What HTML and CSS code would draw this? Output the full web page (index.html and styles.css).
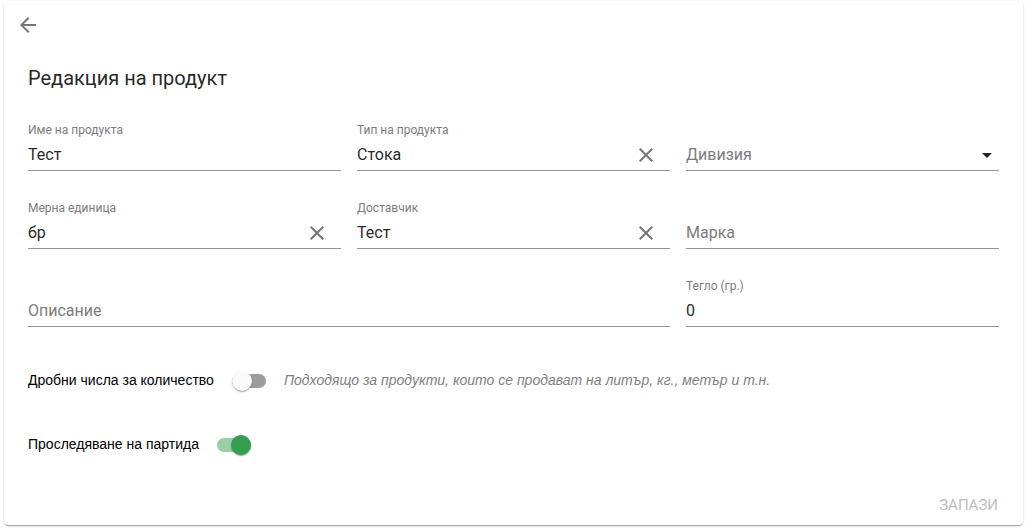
FILE: index.html
```html
<!DOCTYPE html>
<html lang="bg">
<head>
<meta charset="utf-8">
<meta name="viewport" content="width=device-width, initial-scale=1">
<title>Редакция на продукт</title>
<link rel="stylesheet" href="styles.css">
</head>
<body>
<main class="card">
  <button class="icon-button back" type="button" aria-label="Назад">
    <svg viewBox="0 0 24 24"><path d="M20 11H7.83l5.59-5.59L12 4l-8 8 8 8 1.41-1.41L7.83 13H20v-2z"/></svg>
  </button>
  <form class="form">
    <h1 class="title">Редакция на продукт</h1>
    <div class="fields">
      <div class="field">
        <label class="field-label" for="name">Име на продукта</label>
        <div class="field-control"><input class="field-input" id="name" type="text" value="Тест"></div>
      </div>
      <div class="field">
        <label class="field-label" for="type">Тип на продукта</label>
        <div class="field-control clearable">
          <input class="field-input" id="type" type="text" value="Стока">
          <button class="icon-button" type="button" aria-label="Изчисти типа">
            <svg viewBox="0 0 24 24"><path d="M19 6.41L17.59 5 12 10.59 6.41 5 5 6.41 10.59 12 5 17.59 6.41 19 12 13.41 17.59 19 19 17.59 13.41 12z"/></svg>
          </button>
        </div>
      </div>
      <div class="field">
        <div class="field-control">
          <select class="field-input field-select" aria-label="Дивизия"><option>Дивизия</option></select>
        </div>
      </div>
      <div class="field">
        <label class="field-label" for="unit">Мерна единица</label>
        <div class="field-control clearable">
          <input class="field-input" id="unit" type="text" value="бр">
          <button class="icon-button" type="button" aria-label="Изчисти мерната единица">
            <svg viewBox="0 0 24 24"><path d="M19 6.41L17.59 5 12 10.59 6.41 5 5 6.41 10.59 12 5 17.59 6.41 19 12 13.41 17.59 19 19 17.59 13.41 12z"/></svg>
          </button>
        </div>
      </div>
      <div class="field">
        <label class="field-label" for="supplier">Доставчик</label>
        <div class="field-control clearable">
          <input class="field-input" id="supplier" type="text" value="Тест">
          <button class="icon-button" type="button" aria-label="Изчисти доставчика">
            <svg viewBox="0 0 24 24"><path d="M19 6.41L17.59 5 12 10.59 6.41 5 5 6.41 10.59 12 5 17.59 6.41 19 12 13.41 17.59 19 19 17.59 13.41 12z"/></svg>
          </button>
        </div>
      </div>
      <div class="field">
        <div class="field-control"><input class="field-input" type="text" placeholder="Марка" aria-label="Марка"></div>
      </div>
      <div class="field field-wide">
        <div class="field-control"><input class="field-input" type="text" placeholder="Описание" aria-label="Описание"></div>
      </div>
      <div class="field">
        <label class="field-label" for="weight">Тегло (гр.)</label>
        <div class="field-control"><input class="field-input" id="weight" type="text" inputmode="numeric" value="0"></div>
      </div>
    </div>
    <div class="switches">
      <div class="switch-row">
        <label class="switch-label" for="fractions">Дробни числа за количество</label>
        <input class="switch" id="fractions" type="checkbox" role="switch">
        <em class="switch-label hint">Подходящо за продукти, които се продават на литър, кг., метър и т.н.</em>
      </div>
      <div class="switch-row">
        <label class="switch-label" for="batch">Проследяване на партида</label>
        <input class="switch" id="batch" type="checkbox" role="switch" checked>
      </div>
    </div>
    <div class="actions"><button class="save" type="submit" disabled>ЗАПАЗИ</button></div>
  </form>
</main>
</body>
</html>
```
FILE: styles.css
```css
* {
  box-sizing: border-box;
}

body {
  margin: 0;
  padding: 1px 4px 3px;
  background: #fff;
  color: rgba(0, 0, 0, 0.87);
  font-family: Roboto, "Liberation Sans", sans-serif;
  font-size: 16px;
}

.card {
  padding: 12px 0 8px;
  border-radius: 4px;
  background: #fff;
  box-shadow: 0 2px 1px -1px rgba(0, 0, 0, 0.2), 0 1px 1px rgba(0, 0, 0, 0.14), 0 1px 3px rgba(0, 0, 0, 0.12);
}

.icon-button {
  flex: none;
  width: 24px;
  height: 24px;
  padding: 0;
  border: 0;
  background: none;
  color: #757575;
  cursor: pointer;
}

.icon-button svg {
  display: block;
  width: 24px;
  height: 24px;
  fill: currentColor;
}

.back {
  display: block;
  margin-left: 12px;
}

.form {
  padding: 0 24px;
}

.title {
  margin: 29px 0 31px;
  font-size: 20px;
  font-weight: 400;
  line-height: 24px;
}

.fields {
  display: grid;
  grid-template-columns: repeat(3, minmax(0, 1fr));
  gap: 28px 16px;
}

.field {
  display: flex;
  flex-direction: column;
  justify-content: flex-end;
  min-height: 50px;
}

.field-wide {
  grid-column: span 2;
}

.field-label {
  color: #7c7c7c;
  font-size: 12px;
  line-height: 18px;
}

.field-control {
  display: flex;
  align-items: center;
  height: 32px;
  border-bottom: 1px solid #949494;
}

.clearable {
  padding-right: 12px;
}

.field-input {
  flex: 1;
  min-width: 0;
  height: 31px;
  padding: 0;
  border: 0;
  outline: 0;
  background: none;
  color: inherit;
  font: inherit;
}

.field-input::placeholder {
  color: #7c7c7c;
  opacity: 1;
}

.field-select {
  appearance: none;
  background: url("data:image/svg+xml,%3Csvg xmlns='http://www.w3.org/2000/svg' viewBox='0 0 24 24'%3E%3Cpath fill='%23212121' d='M7 10l5 5 5-5z'/%3E%3C/svg%3E") right center / 24px 24px no-repeat;
  color: #7c7c7c;
}

.switches {
  display: grid;
  gap: 32px;
  padding: 38px 0 32px;
}

.switch-row {
  display: flex;
  align-items: center;
  gap: 18px;
  min-height: 32px;
  color: #000;
  font-family: "Liberation Sans", Arial, sans-serif;
  font-size: 14px;
  line-height: 16px;
}

.switch-label {
  padding-bottom: 2px;
}

.switch {
  appearance: none;
  display: flex;
  align-items: center;
  flex: none;
  width: 34px;
  height: 14px;
  margin: 0;
  border-radius: 7px;
  background: #9c9c9c;
  cursor: pointer;
}

.switch::before {
  content: "";
  width: 20px;
  height: 20px;
  flex: none;
  border-radius: 50%;
  background: #fafafa;
  box-shadow: 0 2px 1px -1px rgba(0, 0, 0, 0.2), 0 1px 1px rgba(0, 0, 0, 0.14), 0 1px 3px rgba(0, 0, 0, 0.12);
}

.switch:checked {
  justify-content: flex-end;
  background: #9acea7;
}

.switch:checked::before {
  background: #369e4f;
}

.hint {
  color: #808080;
}

.actions {
  display: flex;
  justify-content: flex-end;
}

.save {
  padding: 0 1px;
  border: 0;
  background: none;
  color: #bdbdbd;
  font: 400 15px/24px Roboto, "Liberation Sans", sans-serif;
}
```
